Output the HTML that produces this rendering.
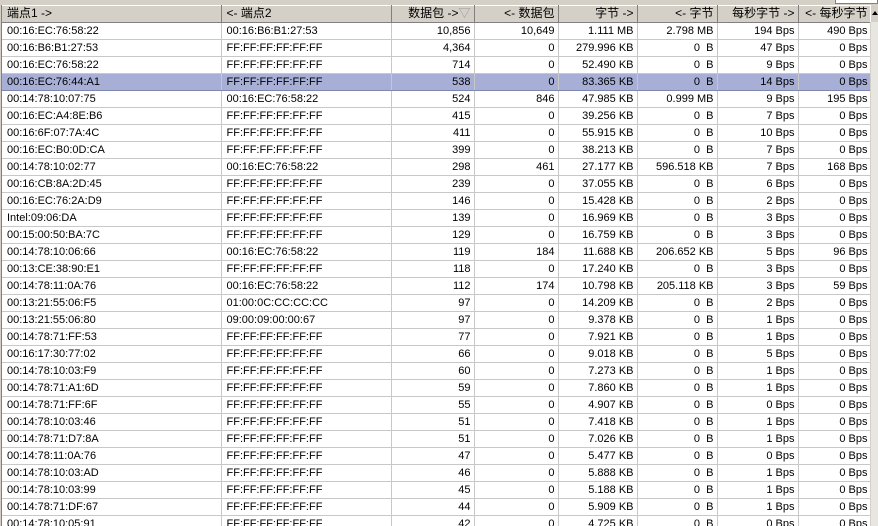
<!DOCTYPE html>
<html><head><meta charset="utf-8"><style>
*{margin:0;padding:0;box-sizing:border-box}
body{width:878px;height:526px;overflow:hidden;background:#d4d0c8;font-family:"Liberation Sans","Noto Sans CJK SC",sans-serif;font-size:11px;color:#000;position:relative}
#wrap{position:absolute;left:1px;top:5px;width:877px;height:521px;background:#fff;border-left:1px solid #808080;overflow:hidden}
table{border-collapse:collapse;table-layout:fixed;width:869px;position:absolute;left:0;top:0}
td,th{height:17px;padding:0 3px 0 5px;white-space:nowrap;overflow:hidden;font-weight:normal;line-height:16px}
th{background:#d4d0c8;border-right:1px solid #808080;border-bottom:1px solid #808080;box-shadow:inset 0 1px #fff;text-align:right;font-size:12px;height:17px;line-height:17px}
th.l{text-align:left}
td{border-right:1px solid #c8c8c8;border-bottom:1px solid #c8c8c8;text-align:right}
td.l{text-align:left}
tr.s td{background:#a7afd6;border-bottom:1px solid #7f86b0}
#sb{position:absolute;left:870px;top:5px;width:8px;height:521px;background:#e8e6e0;border-left:1px solid #d4d0c8}
#sbt{position:absolute;left:870px;top:5px;width:8px;height:17px;background:#d4d0c8;border-left:1px solid #fff}
#tr{position:absolute;left:835px;top:0;width:43px;height:4px;background:#fff;border:1px solid #808080;border-top:none}
.tri{position:absolute;left:872px;top:11px;width:0;height:0;border-left:3px solid transparent;border-right:3px solid transparent;border-bottom:4px solid #000}
</style></head><body>
<div id="tr"></div>
<div id="wrap">
<table>
<colgroup><col style="width:219px"><col style="width:170px"><col style="width:83px"><col style="width:84px"><col style="width:79px"><col style="width:80px"><col style="width:81px"><col style="width:73px"></colgroup>
<tr><th class="l">端点1 -&gt;</th><th class="l">&lt;- 端点2</th><th>数据包 -&gt;<span style="color:#999">▽</span></th><th>&lt;- 数据包</th><th>字节 -&gt;</th><th>&lt;- 字节</th><th>每秒字节 -&gt;</th><th>&lt;- 每秒字节</th></tr>
<tr><td class="l">00:16:EC:76:58:22</td><td class="l">00:16:B6:B1:27:53</td><td>10,856</td><td>10,649</td><td>1.111 MB</td><td>2.798 MB</td><td>194 Bps</td><td>490 Bps</td></tr>
<tr><td class="l">00:16:B6:B1:27:53</td><td class="l">FF:FF:FF:FF:FF:FF</td><td>4,364</td><td>0</td><td>279.996 KB</td><td>0&nbsp; B</td><td>47 Bps</td><td>0 Bps</td></tr>
<tr><td class="l">00:16:EC:76:58:22</td><td class="l">FF:FF:FF:FF:FF:FF</td><td>714</td><td>0</td><td>52.490 KB</td><td>0&nbsp; B</td><td>9 Bps</td><td>0 Bps</td></tr>
<tr class="s"><td class="l">00:16:EC:76:44:A1</td><td class="l">FF:FF:FF:FF:FF:FF</td><td>538</td><td>0</td><td>83.365 KB</td><td>0&nbsp; B</td><td>14 Bps</td><td>0 Bps</td></tr>
<tr><td class="l">00:14:78:10:07:75</td><td class="l">00:16:EC:76:58:22</td><td>524</td><td>846</td><td>47.985 KB</td><td>0.999 MB</td><td>9 Bps</td><td>195 Bps</td></tr>
<tr><td class="l">00:16:EC:A4:8E:B6</td><td class="l">FF:FF:FF:FF:FF:FF</td><td>415</td><td>0</td><td>39.256 KB</td><td>0&nbsp; B</td><td>7 Bps</td><td>0 Bps</td></tr>
<tr><td class="l">00:16:6F:07:7A:4C</td><td class="l">FF:FF:FF:FF:FF:FF</td><td>411</td><td>0</td><td>55.915 KB</td><td>0&nbsp; B</td><td>10 Bps</td><td>0 Bps</td></tr>
<tr><td class="l">00:16:EC:B0:0D:CA</td><td class="l">FF:FF:FF:FF:FF:FF</td><td>399</td><td>0</td><td>38.213 KB</td><td>0&nbsp; B</td><td>7 Bps</td><td>0 Bps</td></tr>
<tr><td class="l">00:14:78:10:02:77</td><td class="l">00:16:EC:76:58:22</td><td>298</td><td>461</td><td>27.177 KB</td><td>596.518 KB</td><td>7 Bps</td><td>168 Bps</td></tr>
<tr><td class="l">00:16:CB:8A:2D:45</td><td class="l">FF:FF:FF:FF:FF:FF</td><td>239</td><td>0</td><td>37.055 KB</td><td>0&nbsp; B</td><td>6 Bps</td><td>0 Bps</td></tr>
<tr><td class="l">00:16:EC:76:2A:D9</td><td class="l">FF:FF:FF:FF:FF:FF</td><td>146</td><td>0</td><td>15.428 KB</td><td>0&nbsp; B</td><td>2 Bps</td><td>0 Bps</td></tr>
<tr><td class="l">Intel:09:06:DA</td><td class="l">FF:FF:FF:FF:FF:FF</td><td>139</td><td>0</td><td>16.969 KB</td><td>0&nbsp; B</td><td>3 Bps</td><td>0 Bps</td></tr>
<tr><td class="l">00:15:00:50:BA:7C</td><td class="l">FF:FF:FF:FF:FF:FF</td><td>129</td><td>0</td><td>16.759 KB</td><td>0&nbsp; B</td><td>3 Bps</td><td>0 Bps</td></tr>
<tr><td class="l">00:14:78:10:06:66</td><td class="l">00:16:EC:76:58:22</td><td>119</td><td>184</td><td>11.688 KB</td><td>206.652 KB</td><td>5 Bps</td><td>96 Bps</td></tr>
<tr><td class="l">00:13:CE:38:90:E1</td><td class="l">FF:FF:FF:FF:FF:FF</td><td>118</td><td>0</td><td>17.240 KB</td><td>0&nbsp; B</td><td>3 Bps</td><td>0 Bps</td></tr>
<tr><td class="l">00:14:78:11:0A:76</td><td class="l">00:16:EC:76:58:22</td><td>112</td><td>174</td><td>10.798 KB</td><td>205.118 KB</td><td>3 Bps</td><td>59 Bps</td></tr>
<tr><td class="l">00:13:21:55:06:F5</td><td class="l">01:00:0C:CC:CC:CC</td><td>97</td><td>0</td><td>14.209 KB</td><td>0&nbsp; B</td><td>2 Bps</td><td>0 Bps</td></tr>
<tr><td class="l">00:13:21:55:06:80</td><td class="l">09:00:09:00:00:67</td><td>97</td><td>0</td><td>9.378 KB</td><td>0&nbsp; B</td><td>1 Bps</td><td>0 Bps</td></tr>
<tr><td class="l">00:14:78:71:FF:53</td><td class="l">FF:FF:FF:FF:FF:FF</td><td>77</td><td>0</td><td>7.921 KB</td><td>0&nbsp; B</td><td>1 Bps</td><td>0 Bps</td></tr>
<tr><td class="l">00:16:17:30:77:02</td><td class="l">FF:FF:FF:FF:FF:FF</td><td>66</td><td>0</td><td>9.018 KB</td><td>0&nbsp; B</td><td>5 Bps</td><td>0 Bps</td></tr>
<tr><td class="l">00:14:78:10:03:F9</td><td class="l">FF:FF:FF:FF:FF:FF</td><td>60</td><td>0</td><td>7.273 KB</td><td>0&nbsp; B</td><td>1 Bps</td><td>0 Bps</td></tr>
<tr><td class="l">00:14:78:71:A1:6D</td><td class="l">FF:FF:FF:FF:FF:FF</td><td>59</td><td>0</td><td>7.860 KB</td><td>0&nbsp; B</td><td>1 Bps</td><td>0 Bps</td></tr>
<tr><td class="l">00:14:78:71:FF:6F</td><td class="l">FF:FF:FF:FF:FF:FF</td><td>55</td><td>0</td><td>4.907 KB</td><td>0&nbsp; B</td><td>0 Bps</td><td>0 Bps</td></tr>
<tr><td class="l">00:14:78:10:03:46</td><td class="l">FF:FF:FF:FF:FF:FF</td><td>51</td><td>0</td><td>7.418 KB</td><td>0&nbsp; B</td><td>1 Bps</td><td>0 Bps</td></tr>
<tr><td class="l">00:14:78:71:D7:8A</td><td class="l">FF:FF:FF:FF:FF:FF</td><td>51</td><td>0</td><td>7.026 KB</td><td>0&nbsp; B</td><td>1 Bps</td><td>0 Bps</td></tr>
<tr><td class="l">00:14:78:11:0A:76</td><td class="l">FF:FF:FF:FF:FF:FF</td><td>47</td><td>0</td><td>5.477 KB</td><td>0&nbsp; B</td><td>0 Bps</td><td>0 Bps</td></tr>
<tr><td class="l">00:14:78:10:03:AD</td><td class="l">FF:FF:FF:FF:FF:FF</td><td>46</td><td>0</td><td>5.888 KB</td><td>0&nbsp; B</td><td>1 Bps</td><td>0 Bps</td></tr>
<tr><td class="l">00:14:78:10:03:99</td><td class="l">FF:FF:FF:FF:FF:FF</td><td>45</td><td>0</td><td>5.188 KB</td><td>0&nbsp; B</td><td>1 Bps</td><td>0 Bps</td></tr>
<tr><td class="l">00:14:78:71:DF:67</td><td class="l">FF:FF:FF:FF:FF:FF</td><td>44</td><td>0</td><td>5.909 KB</td><td>0&nbsp; B</td><td>1 Bps</td><td>0 Bps</td></tr>
<tr><td class="l">00:14:78:10:05:91</td><td class="l">FF:FF:FF:FF:FF:FF</td><td>42</td><td>0</td><td>4.725 KB</td><td>0&nbsp; B</td><td>0 Bps</td><td>0 Bps</td></tr>
</table>
</div>
<div id="sb"></div><div id="sbt"></div><div class="tri"></div>
</body></html>
